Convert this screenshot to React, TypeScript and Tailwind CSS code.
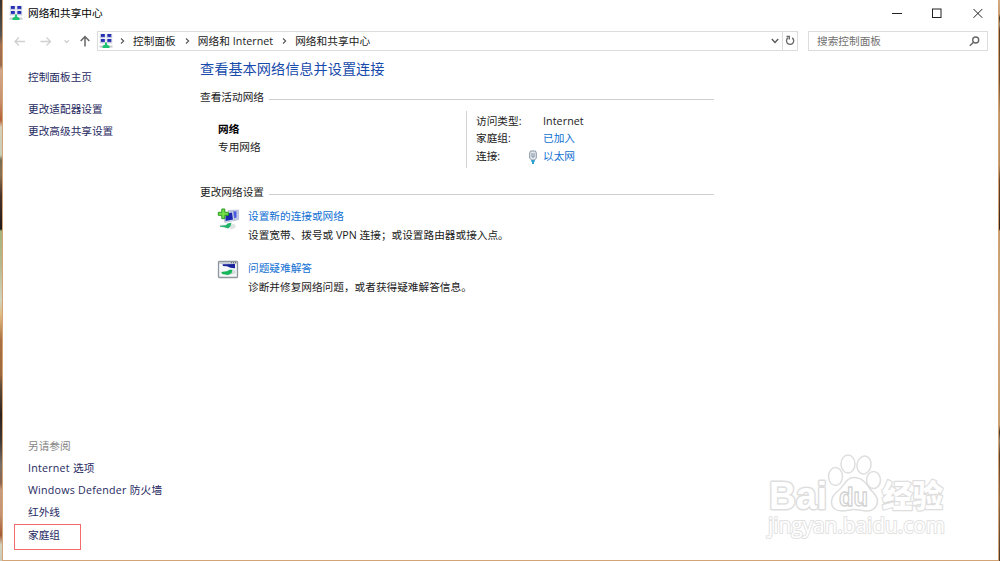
import React from "react";

const crumbs = ["控制面板", "网络和 Internet", "网络和共享中心"];

const seeAlso = ["Internet 选项", "Windows Defender 防火墙", "红外线"];

function NetworkIcon({ className = "" }: { className?: string }) {
  return (
    <svg viewBox="0 0 14 16" className={`h-4 w-3.5 shrink-0 ${className}`}>
      <g fill="#c5cadf">
        <rect x="0.8" y="0.8" width="5.600" height="4.400" />
        <rect x="7.600" y="0.8" width="5.600" height="4.400" />
        <rect x="0.8" y="5.800" width="5.600" height="4.600" />
        <rect x="7.600" y="5.800" width="5.600" height="4.600" />
      </g>
      <g fill="#2830b4">
        <rect x="2" y="1" width="3.800" height="2.900" />
        <rect x="8.400" y="1" width="3.800" height="2.900" />
        <rect x="2" y="6" width="3.800" height="2.900" />
        <rect x="8.400" y="6" width="3.800" height="2.900" />
      </g>
      <rect x="0.500" y="12.600" width="13" height="2" fill="#c8cccd" />
      <path d="M6 9.500h2v2l2.500 1.500v2h-7v-2L6 11.500z" fill="#1fc173" />
    </svg>
  );
}

function Crumb({ label }: { label: string }) {
  return (
    <>
      <svg viewBox="0 0 5 6" className="h-1.5 w-[5px] shrink-0">
        <path d="M1 .5 3.700 3 1 5.500" fill="none" stroke="#555" strokeWidth="1.100" />
      </svg>
      <span className="mr-[9px] ml-2 tracking-[0.05px]">{label}</span>
    </>
  );
}

function SectionTitle({ children }: { children: React.ReactNode }) {
  return (
    <div className="flex h-4 w-[514px] items-center gap-[5px]">
      <span>{children}</span>
      <div className="mt-[5px] h-px flex-1 bg-[#cfcfcf]" />
    </div>
  );
}

function TitleBar() {
  return (
    <div className="flex h-[26px] items-center pr-[13px] pl-1.5">
      <NetworkIcon />
      <span className="ml-[5px] flex-1 text-black">网络和共享中心</span>
      <svg viewBox="0 0 100 12" className="h-3 w-[100px]" fill="none" stroke="#222">
        <path d="M7 6.500h10" />
        <rect x="47.500" y="2" width="8.500" height="8.500" />
        <path d="m88.500 2 8.800 8.800M97.300 2 88.500 10.800" />
      </svg>
    </div>
  );
}

function AddressBar() {
  return (
    <div className="flex h-[31px] items-start pt-[5px] pr-[10px]">
      <svg
        viewBox="0 0 94 21"
        className="h-[21px] w-[94px] shrink-0"
        fill="none"
        strokeWidth="1.300"
      >
        <path d="M22 10.500H12M16 6.500l-4 4 4 4" stroke="#d0d0d0" />
        <path d="M37.500 10.500h10M43.500 6.500l4 4-4 4" stroke="#d0d0d0" />
        <path d="m61.500 9.300 2.200 2.200 2.200-2.200" stroke="#cfcfcf" />
        <path d="M82 15.500v-10M77.700 10 82 5.500l4.300 4.500" stroke="#666" strokeWidth="1.500" />
      </svg>
      <div className="flex h-5 w-[701px] items-center border border-[#dcdcdc] pb-px pl-px">
        <NetworkIcon className="mr-[7px]" />
        {crumbs.map((c) => (
          <Crumb key={c} label={c} />
        ))}
        <div className="flex-1" />
        <svg viewBox="0 0 8 6" className="mr-[3px] h-1.5 w-2">
          <path d="m.8 1 3.200 3.500L7.200 1" fill="none" stroke="#555" strokeWidth="1.300" />
        </svg>
        <div className="flex h-[18px] w-[15px] items-center justify-center border-l border-[#dcdcdc]">
          <svg viewBox="0 0 10 11" className="h-[11px] w-2.5" fill="none" stroke="#666" strokeWidth="1.300">
            <path d="M7.200 2.900A3.600 3.600 0 1 1 3 2.900" />
            <path d="M1.500 1.500h2.800v3" />
          </svg>
        </div>
      </div>
      <div className="ml-2.5 flex h-5 flex-1 items-center justify-between border border-[#dcdcdc] pr-[7px] pl-2 text-[#707070]">
        <span>搜索控制面板</span>
        <svg viewBox="0 0 11 11" className="h-[11px] w-[11px]" fill="none" stroke="#666" strokeWidth="1.400">
          <circle cx="6.700" cy="4" r="3" />
          <path d="M4.500 6.300.8 9.800" />
        </svg>
      </div>
    </div>
  );
}

function Sidebar() {
  return (
    <div className="flex w-[197px] shrink-0 flex-col pt-[9px] text-[#1f2a62]">
      <span className="pl-[25px] leading-[22px]">控制面板主页</span>
      <span className="mt-2.5 pl-[25px] leading-[22px]">更改适配器设置</span>
      <span className="pl-[25px] leading-[22px]">更改高级共享设置</span>
      <div className="flex-1" />
      <span className="pl-[25px] leading-[22px] text-[#858585]">另请参阅</span>
      {seeAlso.map((s) => (
        <span key={s} className="pl-[25px] leading-[22px] tracking-[0.24px] last-of-type:tracking-normal">
          {s}
        </span>
      ))}
      <div className="mt-px mb-[10px] ml-[11px] h-[26px] w-[67px] border border-[#f26a6a] pl-[13px] leading-[21px]">
        家庭组
      </div>
    </div>
  );
}

function EthernetIcon() {
  return (
    <svg viewBox="0 0 8 14" className="h-3.5 w-2">
      <path d="M1.500 1h5l.8 2v5L5.500 10h-3L.7 8V3z" fill="#e3e9ee" stroke="#8796a4" />
      <path d="M3 3v4h2V3" fill="none" stroke="#6e7f8f" strokeWidth=".8" />
      <path d="M2.200 10h3.600v1.800H5V14H3v-2.200h-.8z" fill="#2b9fce" />
    </svg>
  );
}

function NewConnectionIcon() {
  return (
    <svg viewBox="0 0 22 22" className="mt-px h-[22px] w-[22px]">
      <path d="m11 2.500 10.500-.5v9.500l-4 1z" fill="#c5cdea" stroke="#a3abc9" strokeWidth=".6" />
      <path d="m15.500 3.500 4-.3v6.600l-3.500.6z" fill="#4a5ae0" />
      <path d="m7 5 9-2 1.500 9.500-9.800 2z" fill="#d6dcf0" stroke="#9ea7bd" strokeWidth=".5" />
      <path d="m8.500 5.800 6.500-1.400 1 7-7.500 1.500z" fill="#1a27ae" />
      <path d="m1.500 17 16-1 1.500 3-4 2.500-2-1-7-.5z" fill="#dfe4e4" />
      <path d="m3 17.800 6-.6 1.500-1.700 4-.8-1 3.500-2.500 2.300-4-1.500-4-.2z" fill="#20b36a" />
      <path d="M4.800 1h3v3.300h3.600v3H7.800v3.400h-3V7.300H1.300v-3h3.500z" fill="#74de4b" stroke="#279b1c" />
    </svg>
  );
}

function TroubleshootIcon() {
  return (
    <svg viewBox="0 0 22 20" className="mt-px h-5 w-[22px]">
      <rect x="1.500" y="1.500" width="19" height="16" rx=".8" fill="#f5f7f8" stroke="#8f979e" strokeWidth="1.300" />
      <path d="M2.200 3h17.600" stroke="#c2c8cf" strokeWidth="1.800" />
      <path d="M14 2.700h1M16 2.700h1M18 2.700h1" stroke="#56616d" />
      <path d="m5.500 4.300 12.500-.3v4.200l-4.500-.4-3.500-1.600-4-.2z" fill="#1a249b" />
      <path d="m3 12 15.500-2v3.500l-8 1.800z" fill="#d5dbdb" />
      <path d="m4.500 12 5.500-.8 2.500-1.400h3l-1 3.500-3.500 1.700-6-1z" fill="#16b65b" />
    </svg>
  );
}

interface TaskProps {
  icon: React.ReactNode;
  title: string;
  desc: string;
}

function Task({ icon, title, desc }: TaskProps) {
  return (
    <div className="flex h-[52px] pl-[17px]">
      <div className="w-[31px]">{icon}</div>
      <div className="flex flex-col">
        <a className="leading-[18px] text-[#0f70d4]">{title}</a>
        <span className="leading-5">{desc}</span>
      </div>
    </div>
  );
}

function Watermark() {
  return (
    <svg
      viewBox="0 0 184 90"
      className="absolute top-[452px] left-[764px] h-[90px] w-[184px] font-['Liberation_Sans','Noto_Sans_CJK_SC',sans-serif]"
      fill="#fff"
      stroke="#dedede"
      strokeWidth="1.500"
      strokeLinejoin="round"
    >
      <text x="5" y="57" fontSize="38" fontWeight="bold" textLength="58" lengthAdjust="spacingAndGlyphs" strokeWidth="3" paintOrder="stroke">
        Bai
      </text>
      <ellipse cx="71.500" cy="24.500" rx="7" ry="9" />
      <ellipse cx="84" cy="12" rx="7" ry="9" />
      <ellipse cx="100" cy="13" rx="7" ry="9" transform="rotate(12 100 13)" />
      <ellipse cx="109.500" cy="28" rx="7" ry="8.500" />
      <path d="M90 25.500C82 25.500 80 34 75 38C71 41 67.500 44 67.500 50C67.500 56 72 59 78 59C83 59 86 57.500 90 57.500C95 57.500 98 59 103 59C109 59 113.500 55 113.500 49C113.500 43 109 41 106 37C102 31 98 25.500 90 25.500Z" />
      <text x="75" y="54" fontSize="25" fontWeight="bold" textLength="29" lengthAdjust="spacingAndGlyphs" stroke="#d2d2d2" strokeWidth="1.300">
        du
      </text>
      <text x="118" y="55" fontSize="31" fontWeight="900" textLength="61" lengthAdjust="spacingAndGlyphs" strokeWidth="2.400" paintOrder="stroke">
        经验
      </text>
      <text
        x="4"
        y="81"
        fontSize="21"
        textLength="177"
        lengthAdjust="spacingAndGlyphs"
        stroke="#e2e2e2"
        strokeWidth="2"
        paintOrder="stroke"
        className="font-['Open_Sans',sans-serif]"
      >
        jingyan.baidu.com
      </text>
    </svg>
  );
}

export default function App() {
  return (
    <div className="relative flex h-[561px] w-[1000px] overflow-hidden whitespace-nowrap bg-white font-['Open_Sans','Noto_Sans_CJK_SC',sans-serif] text-[10.67px] leading-4 text-[#1a1a1a]">
      {/* desktop wallpaper showing beside the window */}
      <div className="w-0.5 bg-[linear-gradient(180deg,#38332f_0px,#555_35px,#a5714f_45px,#9a6b4d_65px,#d0a78b_70px,#c8916f_100px,#b56135_120px,#d4ceb9_127px,#c9ceb9_155px,#776c55_160px,#8a7152_175px,#4a342a_195px,#1f1b1b_229px,#a4b47c_231px,#b7b88c_265px,#d0d4c0_300px,#e0ba80_315px,#aa7142_340px,#9b673d_375px,#64503c_385px,#2a231f_415px,#3c3836_440px,#777069_465px,#8b654e_483px,#c79b7d_490px,#c49272_515px,#a35b35_535px,#d5d3c1_545px,#c8c9b8_561px)]" />
      <div className="flex w-[997px] flex-col border-x border-b border-[#d3a576] bg-white">
        <TitleBar />
        <AddressBar />
        <div className="flex flex-1">
          <Sidebar />
          <div className="flex flex-col">
            <h1 className="mt-px text-[14.2px] leading-[22px] text-[#174bab]">
              查看基本网络信息并设置连接
            </h1>
            <div className="mt-[9px]">
              <SectionTitle>查看活动网络</SectionTitle>
            </div>
            <div className="mt-1.5 flex h-[57px]">
              <div className="flex w-[266px] flex-col pt-[9px] pl-[18px]">
                <span className="leading-[18px] font-bold text-black">网络</span>
                <span className="leading-[18px]">专用网络</span>
              </div>
              <div className="grid grid-cols-[51px_16px_auto] content-start border-l border-[#d3d3d3] pt-[1.5px] pl-[9px] leading-[17.7px]">
                <span>访问类型:</span>
                <span />
                <span className="tracking-[0.1px]">Internet</span>
                <span>家庭组:</span>
                <span />
                <a className="text-[#0f70d4]">已加入</a>
                <span>连接:</span>
                <span className="flex items-center pl-0.5">
                  <EthernetIcon />
                </span>
                <a className="text-[#0f70d4]">以太网</a>
              </div>
            </div>
            <div className="mt-4 mb-[7px]">
              <SectionTitle>更改网络设置</SectionTitle>
            </div>
            <Task
              icon={<NewConnectionIcon />}
              title="设置新的连接或网络"
              desc="设置宽带、拨号或 VPN 连接；或设置路由器或接入点。"
            />
            <Task
              icon={<TroubleshootIcon />}
              title="问题疑难解答"
              desc="诊断并修复网络问题，或者获得疑难解答信息。"
            />
          </div>
        </div>
      </div>
      <div className="w-px bg-[linear-gradient(180deg,#d0ac87_0px,#c39a72_14px,#3f3021_18px,#9c907c_24px,#5e3f27_30px,#70502f_80px,#bd9266_115px,#b58b61_165px,#6c4428_180px,#34241c_229px,#c29a6c_231px,#d0a985_320px,#c49c72_425px,#453525_432px,#8a8270_441px,#5c3d25_455px,#8c6845_500px,#4b3829_561px)]" />
      <Watermark />
    </div>
  );
}
